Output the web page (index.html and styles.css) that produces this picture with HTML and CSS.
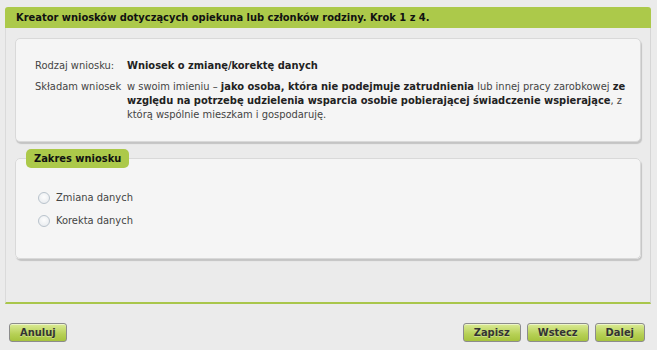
FILE: index.html
```html
<!DOCTYPE html>
<html lang="pl">
<head>
<meta charset="utf-8">
<title>Kreator wniosków</title>
<link rel="stylesheet" href="styles.css">
</head>
<body>
<div class="page">
  <div class="panel">
    <div class="panel-head">Kreator wniosków dotyczących opiekuna lub członków rodziny. Krok 1 z 4.</div>
    <div class="panel-body">
      <div class="card info">
        <div class="info-row first">
          <div class="info-label">Rodzaj wniosku:</div>
          <div class="info-value"><b>Wniosek o zmianę/korektę danych</b></div>
        </div>
        <div class="info-row">
          <div class="info-label">Składam wniosek</div>
          <div class="info-value">w swoim imieniu – <b>jako osoba, która nie podejmuje zatrudnienia</b> lub innej pracy zarobkowej <b>ze względu na potrzebę udzielenia wsparcia osobie pobierającej świadczenie wspierające</b>, z którą wspólnie mieszkam i gospodaruję.</div>
        </div>
      </div>
      <fieldset class="card scope">
        <legend class="scope-legend">Zakres wniosku</legend>
        <label class="radio-row"><span class="radio"></span>Zmiana danych</label>
        <label class="radio-row"><span class="radio"></span>Korekta danych</label>
      </fieldset>
    </div>
  </div>
  <div class="actions">
    <button class="btn" type="button">Anuluj</button>
    <div class="actions-right">
      <button class="btn" type="button">Zapisz</button>
      <button class="btn" type="button">Wstecz</button>
      <button class="btn" type="button">Dalej</button>
    </div>
  </div>
</div>
</body>
</html>
```

FILE: styles.css
```css
html, body {
  margin: 0;
  padding: 0;
  background: #ebebeb;
}
body {
  font-family: "DejaVu Sans Condensed", "DejaVu Sans", Tahoma, sans-serif;
  font-size: 11px;
  color: #444;
}
.page {
  padding: 7px 6px 0 5px;
}
.panel-head {
  height: 21px;
  line-height: 21px;
  background: #acc94a;
  border-radius: 3px 3px 0 0;
  padding-left: 11px;
  font-weight: bold;
  color: #111;
}
.panel-body {
  border-left: 1px solid #dadada;
  border-right: 1px solid #d6d6d6;
  border-bottom: 2px solid #a9c64b;
  padding: 10px 9px 43px 9px;
}
.card {
  background: #f5f5f5;
  border: 1px solid #d9d9d9;
  border-radius: 5px;
  box-shadow: 1px 2px 1px #c4c4c4;
}
.info {
  padding: 20px 1px 19px 19px;
}
.info-row {
  display: flex;
  line-height: 14px;
}
.info-row.first {
  margin-bottom: 7px;
}
.info-label {
  width: 92px;
  flex: none;
  color: #444;
}
.info-value b {
  color: #222;
}
.scope {
  margin: 7px 0 0 0;
  padding: 18px 20px 26px 10px;
  min-width: 0;
}
.scope-legend {
  background: #acc94a;
  border-radius: 5px;
  padding: 0 8px;
  height: 19px;
  line-height: 19px;
  font-size: 11px;
  font-weight: bold;
  color: #111;
  margin-left: 0;
}
.radio-row {
  display: flex;
  align-items: center;
  height: 23px;
  margin-left: 12px;
  color: #444;
  font-size: 11px;
}
.radio {
  width: 10px;
  height: 10px;
  border: 1px solid #b9c3cc;
  border-radius: 50%;
  background: radial-gradient(circle at 50% 40%, #fdfdfd, #e4e8ec);
  margin-right: 6px;
}
.actions {
  display: flex;
  justify-content: space-between;
  padding: 19px 6px 0 4px;
}
.actions-right {
  display: flex;
  gap: 6px;
}
.btn {
  height: 19px;
  padding: 0 10px;
  border: 1px solid #8c8c8c;
  border-radius: 3px;
  background: linear-gradient(#dbeb95, #b6d055 60%, #a6c33d);
  font-family: "DejaVu Sans Condensed", "DejaVu Sans", Tahoma, sans-serif;
  font-size: 11px;
  font-weight: bold;
  color: #333;
  text-shadow: 0 1px 0 rgba(255,255,255,0.35);
  box-shadow: inset 0 1px 0 rgba(255,255,255,0.5);
}
```
